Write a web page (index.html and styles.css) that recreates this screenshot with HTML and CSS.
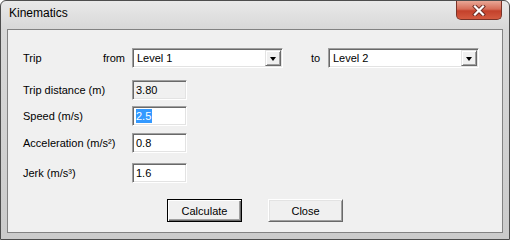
FILE: index.html
```html
<!DOCTYPE html>
<html lang="en">
  <head>
    <meta charset="UTF-8" />
    <title>Kinematics</title>
    <link rel="stylesheet" href="styles.css">
  </head>
  <body>
    <div class="window">
      <div class="titlebar">
        <span class="title">Kinematics</span>
        <div class="close">
          <svg width="14" height="11" viewBox="0 0 14 11">
            <path d="M3,1.5 L11,9.5 M11,1.5 L3,9.5" stroke="#6b2a22" stroke-width="4" stroke-linecap="square" />
            <path d="M3,1.5 L11,9.5 M11,1.5 L3,9.5" stroke="#ffffff" stroke-width="2.2" stroke-linecap="square" />
          </svg>
        </div>
      </div>

      <div class="client">
        <div class="form">
          <div class="row">
            <span class="label-trip">Trip</span>
            <span class="label-from">from</span>
            <div class="combo">
              <span class="combo-text">Level 1</span>
              <span class="combo-btn"><span class="arrow"></span></span>
            </div>
            <span class="label-to">to</span>
            <div class="combo">
              <span class="combo-text">Level 2</span>
              <span class="combo-btn"><span class="arrow"></span></span>
            </div>
          </div>

          <div class="row row-distance">
            <span class="label">Trip distance (m)</span>
            <div class="field readonly">3.80</div>
          </div>

          <div class="row row-speed">
            <span class="label">Speed (m/s)</span>
            <div class="field"><span class="selected">2.5</span></div>
          </div>

          <div class="row row-accel">
            <span class="label">Acceleration (m/s²)</span>
            <div class="field">0.8</div>
          </div>

          <div class="row row-jerk">
            <span class="label">Jerk (m/s³)</span>
            <div class="field">1.6</div>
          </div>
        </div>

        <div class="actions">
          <div class="btn btn-default"><span>Calculate</span></div>
          <div class="btn"><span>Close</span></div>
        </div>
      </div>
    </div>
  </body>
</html>
```

FILE: styles.css
```css
body {
  margin: 0;
  padding: 0;
  font-family: "Liberation Sans", Arial, sans-serif;
  font-size: 11px;
  color: #000;
  background-color: #ffffff;
}

/* Marco de la ventana */
.window {
  width: 510px;
  height: 240px;
  box-sizing: border-box;
  border: 1px solid #4d4d4d;
  border-radius: 6px 6px 0 0;
  background: linear-gradient(#e9e9e9, #d8d8d8 28px, #cbcbcb);
  display: flex;
  flex-direction: column;
}

.titlebar {
  height: 28px;
  display: flex;
  align-items: flex-start;
  padding: 0 7px 0 8px;
}

.title {
  flex: 1;
  font-size: 12px;
  line-height: 15px;
  margin-top: 5px;
}

.close {
  width: 46px;
  height: 19px;
  box-sizing: border-box;
  border: 1px solid #7a3328;
  border-top: none;
  border-radius: 0 0 5px 5px;
  background: linear-gradient(#e9a796, #d66d58 45%, #c4412b 55%, #d45a40);
  display: flex;
  align-items: center;
  justify-content: center;
}

/* Area cliente */
.client {
  flex: 1;
  margin: 0 6px 6px;
  border: 1px solid #828282;
  background-color: #f0f0f0;
}

.form {
  padding: 18px 0 0 15px;
}

.row {
  display: flex;
  align-items: center;
  height: 20px;
}

.row-distance {
  margin-top: 12px;
}

.row-speed {
  margin-top: 6px;
}

.row-accel {
  margin-top: 7px;
}

.row-jerk {
  margin-top: 10px;
}

.label-trip {
  width: 80px;
}

.label-from {
  width: 29px;
}

.label-to {
  width: 17px;
  margin-left: 28px;
}

.label {
  width: 109px;
}

/* Controles hundidos (estilo clasico) */
.combo,
.field {
  box-sizing: border-box;
  height: 20px;
  border: 1px solid;
  border-color: #a0a0a0 #ffffff #ffffff #a0a0a0;
  box-shadow: inset 1px 1px 0 #696969, inset -1px -1px 0 #e3e3e3;
  background-color: #ffffff;
}

.combo {
  width: 151px;
  display: flex;
  align-items: center;
  padding: 1px;
}

.combo-text {
  flex: 1;
  padding-left: 3px;
}

.combo-btn {
  width: 16px;
  height: 16px;
  box-sizing: border-box;
  border: 1px solid;
  border-color: #e3e3e3 #696969 #696969 #e3e3e3;
  box-shadow: inset 1px 1px 0 #ffffff, inset -1px -1px 0 #a0a0a0;
  background-color: #f0f0f0;
  display: flex;
  align-items: center;
  justify-content: center;
}

.arrow {
  width: 0;
  height: 0;
  border-left: 3.5px solid transparent;
  border-right: 3.5px solid transparent;
  border-top: 4px solid #000;
  margin-top: 1px;
}

.field {
  width: 55px;
  padding: 0 0 0 3px;
  line-height: 18px;
}

.field.readonly {
  background-color: #f0f0f0;
}

.selected {
  display: inline-block;
  background-color: #3399ff;
  color: #ffffff;
  line-height: 14px;
  padding-right: 1px;
}

/* Botones */
.actions {
  display: flex;
  justify-content: center;
  gap: 26px;
  margin-top: 16px;
}

.btn {
  width: 75px;
  height: 23px;
  box-sizing: border-box;
  border: 1px solid;
  border-color: #ffffff #696969 #696969 #ffffff;
  box-shadow: inset 1px 1px 0 #e3e3e3, inset -1px -1px 0 #a0a0a0;
  background-color: #f0f0f0;
  display: flex;
  align-items: center;
  justify-content: center;
}

.btn-default {
  border-color: #000000;
  box-shadow: inset 1px 1px 0 #ffffff, inset -1px -1px 0 #696969, inset -2px -2px 0 #a0a0a0;
}
```
